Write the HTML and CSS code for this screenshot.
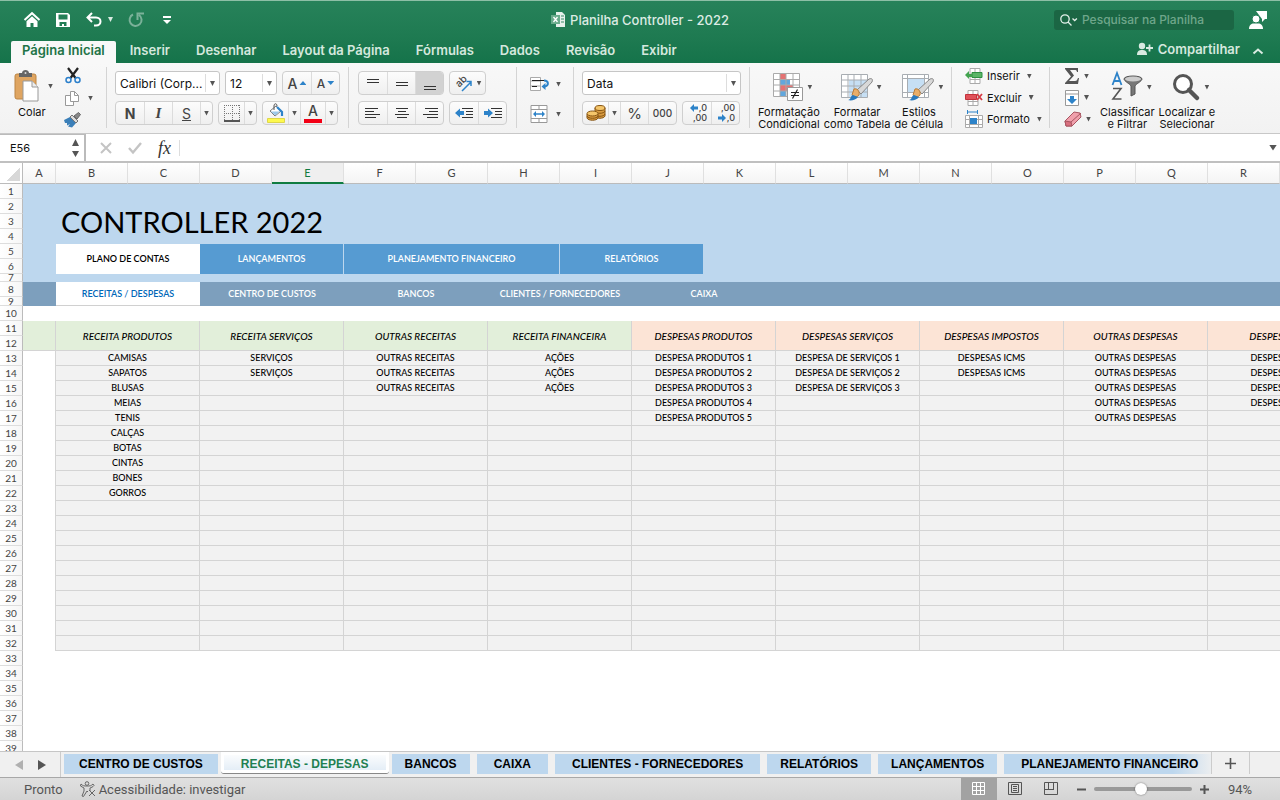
FILE: index.html
```
<!DOCTYPE html>
<html lang="pt-BR">
<head>
<meta charset="UTF-8">
<meta name="viewport" content="width=device-width, initial-scale=1.0">
<title>Planilha Controller - 2022</title>
<link rel="stylesheet" href="styles.css">
</head>
<body>

<header class="titlebar">
    <div class="quick">
        <button aria-label="Início"><svg width="18" height="18" viewBox="0 0 18 18"><path d="M1.500 9 9 2.200 16.500 9" fill="none" stroke="#fff" stroke-width="2"/><path d="M3.500 10.200 9 5.300l5.500 4.900V16h-4v-4h-3v4h-4z" fill="#fff"/></svg></button>
        <button aria-label="Salvar"><svg width="16" height="16" viewBox="0 0 16 16"><path fill="#fff" fill-rule="evenodd" d="M1 1h12l2 2v12H1zM3.500 2.500v5h9v-5zM4.500 10v4H7v-2h2v2h2.500v-4z"/></svg></button>
        <button aria-label="Desfazer"><svg width="18" height="18" viewBox="0 0 18 18"><path d="M7 2 2.500 6.500 7 11M3 6.500h8c6 0 6 8 0 8H9" fill="none" stroke="#fff" stroke-width="2"/></svg></button>
        <button class="caret-btn" aria-label="Opções de desfazer"><i class="caret light"></i></button>
        <button class="faded" aria-label="Refazer"><svg width="18" height="18" viewBox="0 0 18 18"><path d="M6 3.500a6 6 0 1 0 6 .5M10.500 9V2.500H17" fill="none" stroke="#fff" stroke-width="2"/></svg></button>
        <button class="customize" aria-label="Personalizar"><svg width="8" height="10" viewBox="0 0 8 10"><path d="M0 1h8v2H0zM0 5h8L4 9z" fill="#fff"/></svg></button>
    </div>
    <div class="doc-title">
        <svg width="15" height="15" viewBox="0 0 15 15"><path d="M5 0h6l3 3v12H5z" fill="#e6f1eb"/><path d="M10 4h3M10 7h3M10 10h3" stroke="#3a8a66"/><path d="M0 3h9v9H0z" fill="#69ab8b"/><path d="m2.500 5 4 5M6.500 5l-4 5" stroke="#fff" stroke-width="1.300"/></svg>
        Planilha Controller - 2022
    </div>
    <div class="title-right">
        <label class="search">
            <svg width="20" height="14" viewBox="0 0 20 14"><circle cx="6" cy="6" r="4.200" fill="none" stroke="#e4f0ea" stroke-width="1.300"/><path d="m9 9 3.500 3.500M13.500 5.500l2.200 2 2.200-2" fill="none" stroke="#e4f0ea" stroke-width="1.300"/></svg>
            <input type="text" placeholder="Pesquisar na Planilha" aria-label="Pesquisar na Planilha">
        </label>
        <button aria-label="Conta"><svg width="20" height="20" viewBox="0 0 20 20"><path d="M8 1h11v8h-2l-3 3V9z" fill="#fff"/><circle cx="8" cy="9" r="4" fill="#fff" stroke="#1f7c53"/><path d="M1 19c0-4 2.500-5.500 4.500-5.500h5c2 0 4.500 1.500 4.500 5.500z" fill="#fff"/></svg></button>
    </div>
</header>

<nav class="tabs">
    <a href="#" class="active">Página Inicial</a>
    <a href="#">Inserir</a>
    <a href="#">Desenhar</a>
    <a href="#">Layout da Página</a>
    <a href="#">Fórmulas</a>
    <a href="#">Dados</a>
    <a href="#">Revisão</a>
    <a href="#">Exibir</a>
    <button class="share">
        <svg width="18" height="14" viewBox="0 0 18 14"><circle cx="6" cy="4" r="3.200" fill="#d9eae1"/><path d="M1 13c0-4 2-5 5-5s5 1 5 5z" fill="#d9eae1"/><path d="M10 6h7M13.500 2.500v7" stroke="#d9eae1" stroke-width="1.800"/></svg>
        Compartilhar
    </button>
    <button class="collapse" aria-label="Recolher"><svg width="12" height="8" viewBox="0 0 12 8"><path d="m1.500 6.500 4.500-4 4.500 4" fill="none" stroke="#d9eae1" stroke-width="2"/></svg></button>
</nav>

<section class="ribbon">
    <div class="group clipboard">
        <button class="paste">
            <span class="with-caret">
                <svg width="26" height="32" viewBox="0 0 26 32"><rect x="1" y="4" width="21" height="25" rx="2" fill="#dfa561" stroke="#bc8545"/><path d="M5 3h3c0-4 7-4 7 0h3v4H5z" fill="#666"/><circle cx="11.500" cy="3" r="1" fill="#ddd"/><path d="M9 11h9l6 6v14H9z" fill="#fff" stroke="#999"/><path d="M18 11v6h6" fill="#eee" stroke="#999"/></svg>
                <i class="caret"></i>
            </span>
            <span class="paste-label">Colar</span>
        </button>
        <div class="stack">
            <button aria-label="Recortar"><svg width="18" height="17" viewBox="0 0 18 17"><path d="m4 1 7.500 10M14 1 6.500 11" stroke="#222" stroke-width="2.200"/><circle cx="4.500" cy="13" r="2.500" fill="none" stroke="#2a7fcb" stroke-width="1.500"/><circle cx="13.500" cy="13" r="2.500" fill="none" stroke="#2a7fcb" stroke-width="1.500"/></svg></button>
            <button aria-label="Copiar"><svg width="16" height="17" viewBox="0 0 16 17"><path d="M1.500 5.500h5l3 3v7h-8z" fill="#fff" stroke="#999"/><path d="M6.500 1.500h4l4 4v6h-8z" fill="#fff" stroke="#999"/><path d="M10.500 1.500v4h4" fill="none" stroke="#999"/></svg><i class="caret"></i></button>
            <button aria-label="Pincel"><svg width="18" height="16" viewBox="0 0 18 16"><path d="m0 8 6-3 6 6-4 4.500-4-1 2-2.500-3 1.500 0-2.500-2 0z" fill="#3b7fb8"/><path d="m6 5 2-2 6 6-2 2z" fill="#ddd" stroke="#777"/><path d="m10 4 4.500-3.500 2 2L13 7z" fill="#888" stroke="#666"/></svg></button>
        </div>
    </div>

    <div class="group rows">
        <div class="line">
            <select class="font-name" aria-label="Fonte"><option>Calibri (Corp...</option></select>
            <select class="font-size" aria-label="Tamanho"><option>12</option></select>
            <div class="btns">
                <button class="mid grow" aria-label="Aumentar fonte">A<i class="tri up"></i></button>
                <button class="mid shrink" aria-label="Diminuir fonte">A<i class="tri"></i></button>
            </div>
        </div>
        <div class="line">
            <div class="btns">
                <button class="mid"><b>N</b></button>
                <button class="mid serif"><i>I</i></button>
                <button class="mid"><u>S</u></button>
                <button class="drop" aria-label="Mais sublinhados"><i class="caret"></i></button>
            </div>
            <div class="btns">
                <button class="small" aria-label="Bordas"><svg width="18" height="18" viewBox="0 0 18 18"><path d="M1.500 1v15M9.500 1v15M16.500 1v15M1 1.500h16M1 9.500h16" stroke="#777" stroke-dasharray="1 1"/><path d="M1 17h16" stroke="#222" stroke-width="1.500"/></svg></button>
                <button class="drop" aria-label="Mais bordas"><i class="caret"></i></button>
            </div>
            <div class="btns">
                <button class="small" aria-label="Cor de preenchimento"><svg width="18" height="20" viewBox="0 0 18 20"><path d="m3 8 6-5 5 5-6 5z" fill="#fff" stroke="#777"/><path d="M3.500 8.500h9l-4 4z" fill="#9bc8ea"/><path d="M7 7V3c0-3 3-3 3 0" fill="none" stroke="#555"/><path d="m10 4 5 5v4" fill="none" stroke="#2d83c9" stroke-width="2.200"/><path d="M.5 15.500h17v4H.5z" fill="#fdf94e" stroke="#ded64a"/></svg></button>
                <button class="drop" aria-label="Mais cores"><i class="caret"></i></button>
                <button class="small color" aria-label="Cor da fonte"><span>A</span></button>
                <button class="drop" aria-label="Mais cores da fonte"><i class="caret"></i></button>
            </div>
        </div>
    </div>

    <div class="group rows align">
        <div class="line">
            <div class="btns">
                <button class="mid" aria-label="Alinhar acima"><svg width="14" height="16" viewBox="0 0 14 16"><path d="M1 4.500h12M1 7.500h12" stroke="#333"/></svg></button>
                <button class="mid" aria-label="Alinhar no meio"><svg width="14" height="16" viewBox="0 0 14 16"><path d="M1 7.500h12M1 10.500h12" stroke="#333"/></svg></button>
                <button class="mid pressed" aria-label="Alinhar abaixo"><svg width="14" height="16" viewBox="0 0 14 16"><path d="M1 11.500h12M1 14.500h12" stroke="#333"/></svg></button>
            </div>
            <div class="btns">
                <button class="wide" aria-label="Orientação"><svg width="20" height="20" viewBox="0 0 20 20"><text x="2" y="11" font-size="10" font-weight="500" fill="#444" transform="rotate(-45 8 9)">ab</text><path d="m8 18 9-9M12.500 8.500H17V13" fill="none" stroke="#2d83c9" stroke-width="1.500"/></svg><i class="caret"></i></button>
            </div>
        </div>
        <div class="line">
            <div class="btns">
                <button class="mid" aria-label="Alinhar à esquerda"><svg width="16" height="12" viewBox="0 0 16 12"><path d="M0 1.500h13M0 4.500h9M0 7.500h15M0 10.500h11" stroke="#333"/></svg></button>
                <button class="mid" aria-label="Centralizar"><svg width="16" height="12" viewBox="0 0 16 12"><path d="M2 1.500h12M4 4.500h8M1 7.500h14M3 10.500h10" stroke="#333"/></svg></button>
                <button class="mid" aria-label="Alinhar à direita"><svg width="16" height="12" viewBox="0 0 16 12"><path d="M3 1.500h13M7 4.500h9M1 7.500h15M5 10.500h11" stroke="#333"/></svg></button>
            </div>
            <div class="btns">
                <button class="mid" aria-label="Diminuir recuo"><svg width="18" height="12" viewBox="0 0 18 12"><path d="M7 1.500h11M11 4.500h7M11 7.500h7M7 10.500h11" stroke="#333"/><path d="m0 6 5-4.500V4h4v4H5v2.500z" fill="#2d83c9"/></svg></button>
                <button class="mid" aria-label="Aumentar recuo"><svg width="18" height="12" viewBox="0 0 18 12"><path d="M7 1.500h11M11 4.500h7M11 7.500h7M7 10.500h11" stroke="#333"/><path d="M9 6 4 1.500V4H0v4h4v2.500z" fill="#2d83c9"/></svg></button>
            </div>
        </div>
    </div>

    <div class="group rows merge">
        <button class="flat" aria-label="Quebrar texto"><svg width="20" height="14" viewBox="0 0 20 14"><path d="M.5.5h10v13H.5zM.5 4h10M.5 9h10" fill="#fff" stroke="#aaa"/><path d="M2 3.500h12M2 9.500h5" stroke="#222"/><path d="M14 3.500c5 0 5 5 1 6" fill="none" stroke="#2d83c9" stroke-width="2"/><path d="m11.500 9.500 4-3.500v7z" fill="#2d83c9"/></svg><i class="caret"></i></button>
        <button class="flat" aria-label="Mesclar"><svg width="18" height="18" viewBox="0 0 18 18"><path d="M1 .5h16v17H1zM1 4.500h16M1 13.500h16M9 0v4.500M9 13.500V18" fill="#fff" stroke="#999"/><path d="M4 9h10" stroke="#2d83c9" stroke-width="1.500"/><path d="m3 9 3-3v6zM15 9l-3-3v6z" fill="#2d83c9"/></svg><i class="caret"></i></button>
    </div>

    <div class="group rows">
        <div class="line">
            <select class="number-format" aria-label="Formato de número"><option>Data</option></select>
        </div>
        <div class="line">
            <div class="btns">
                <button class="small" aria-label="Moeda"><svg width="20" height="18" viewBox="0 0 20 18"><g fill="#d99b3f" stroke="#865514"><path d="M9 4v8c1 3 9 3 10 0V4z"/><ellipse cx="14" cy="4" rx="5" ry="2.500" fill="#f5c66b"/><path d="M9 7c1 3 9 3 10 0M9 10c1 3 9 3 10 0" fill="none"/><path d="M1 10v4c1 3 10 3 11 0v-4z"/><ellipse cx="6.500" cy="9.500" rx="5.500" ry="2.500" fill="#f5c66b"/><path d="M1 12c1 3 10 3 11 0" fill="none"/></g></svg></button>
                <button class="drop" aria-label="Mais moedas"><i class="caret"></i></button>
                <button class="mid percent">%</button>
                <button class="mid thousands">000</button>
            </div>
            <div class="btns">
                <button class="mid decimals"><span><svg width="9" height="8" viewBox="0 0 9 8"><path d="m0 4 4-4v2.500h4v3H4V8z" fill="#2d83c9"/></svg>,0</span><span>,00</span></button>
                <button class="mid decimals"><span>,00</span><span><svg width="9" height="8" viewBox="0 0 9 8"><path d="M8 4 4 0v2.500H0v3h4V8z" fill="#2d83c9"/></svg>,0</span></button>
            </div>
        </div>
    </div>

    <div class="group bigs">
        <button class="big">
            <span class="with-caret"><svg width="30" height="30" viewBox="0 0 30 30"><path d="M.5 1.500h26v23H.5z" fill="#fff"/><path d="M7 1.500h6v6H7zM7 13h13v6H7z" fill="#e57373"/><path d="M7 7.500h10V13H7zM7 19h6v6H7z" fill="#62a7dd"/><path d="M.5 1.500h26v23H.5zM7 1v24M13 1v24M20 1v24M0 7.500h27M0 13h27M0 19h27" fill="none" stroke="#aaa"/><path d="M14.500 15.500h15v13h-15z" fill="#fff" stroke="#999"/><path d="M18 20.500h8M18 23.500h8M24.500 17.500l-5 9" stroke="#222" stroke-width="1.200"/></svg><i class="caret"></i></span>
            Formatação<br>Condicional
        </button>
        <button class="big">
            <span class="with-caret"><svg width="32" height="30" viewBox="0 0 32 30"><path d="M.5 2.500h26v23H.5z" fill="#fff"/><path d="M8 8h18v17H8z" fill="#c6dff4"/><path d="M.5 2.500h26v23H.5zM7 2v23M13 2v23M20 2v23M0 8h27M0 14h27M0 20h27" fill="none" stroke="#a8adb2"/><path d="M28 7c3-1 4 0 3 3L20 22l-4-4z" fill="#d8d8d8" stroke="#888"/><path d="M13 17c3-1 6 2 5 6-2 3-6 2-7 0z" fill="#e8ad68" stroke="#b87c3a"/><path d="M7 28c3 0 2-4 5-5l5 2c-2 3-7 4-10 3z" fill="#2879bd"/></svg><i class="caret"></i></span>
            Formatar<br>como Tabela
        </button>
        <button class="big">
            <span class="with-caret"><svg width="32" height="30" viewBox="0 0 32 30"><path d="M.5 2.500h26v23H.5z" fill="#fff"/><path d="M6 7h17v13H6z" fill="#c6dff4"/><path d="M.5 2.500h26v23H.5zM5.500 2v23M22.500 2v23M0 6.500h27M0 20.500h27" fill="none" stroke="#a8adb2"/><path d="M28 7c3-1 4 0 3 3L20 22l-4-4z" fill="#d8d8d8" stroke="#888"/><path d="M13 17c3-1 6 2 5 6-2 3-6 2-7 0z" fill="#e8ad68" stroke="#b87c3a"/><path d="M7 28c3 0 2-4 5-5l5 2c-2 3-7 4-10 3z" fill="#2879bd"/></svg><i class="caret"></i></span>
            Estilos<br>de Célula
        </button>
    </div>

    <div class="group cells">
        <button><svg width="18" height="16" viewBox="0 0 18 16"><path d="M5 .5h10v15H5zM10 0v15M5 11.500h10" fill="#fff" stroke="#aaa"/><path d="M7 4.500h10v5H7z" fill="#5bb567" stroke="#2f8f42"/><path d="m0 7 4-4v3h3v3H4v2z" fill="#43a34f"/></svg>Inserir<i class="caret"></i></button>
        <button><svg width="18" height="16" viewBox="0 0 18 16"><path d="M3 .5h10v15H3zM8 0v15M3 11.500h10" fill="#fff" stroke="#aaa"/><path d="M.5 4.500h11v5H.5z" fill="#e0525a" stroke="#c2313a"/><path d="m12 4 5 6M17 4l-5 6" stroke="#d63a43" stroke-width="1.800"/></svg>Excluir<i class="caret"></i></button>
        <button><svg width="18" height="18" viewBox="0 0 18 18"><path d="M.5 5.500h17v12H.5zM4.500 5v12M13.500 5v12M0 9.500h18M0 14.500h18" fill="#fff" stroke="#aaa"/><path d="M5 8h7v6H5z" fill="#2d83c9"/><path d="M2.500 0v4M12.500 0v4M3 2h9" stroke="#2d83c9"/></svg>Formato<i class="caret"></i></button>
    </div>

    <div class="group last">
        <div class="tools">
            <button aria-label="Soma"><svg width="16" height="16" viewBox="0 0 16 16"><path d="M1 0h13v4h-1c-.5-2-1-2-2.500-2H6l4 5.500L5 13h6c2 0 2-1 3-3h1l-1 6H1v-1l6-6.500L1 1z" fill="#555"/></svg><i class="caret"></i></button>
            <button aria-label="Preencher"><svg width="16" height="16" viewBox="0 0 16 16"><path d="M1.500.5h13v15h-13zM1.500 4h13" fill="#fff" stroke="#999"/><path d="M6 6h4v3h3l-5 5-5-5h3z" fill="#2d83c9"/></svg><i class="caret"></i></button>
            <button aria-label="Limpar"><svg width="18" height="16" viewBox="0 0 18 16"><path d="m1 10 9-9 6 1 1 4-9 9H2z" fill="#f0a0ac" stroke="#a85561"/><path d="m1 10 6 1 1 4H2zM7 11l10-9" fill="#d9707f" stroke="#a85561"/></svg><i class="caret"></i></button>
        </div>
        <button class="big">
            <span class="with-caret"><svg width="32" height="30" viewBox="0 0 32 30"><path d="M1.500 13 6 1l4.500 12M3 9h6" fill="none" stroke="#2d83c9" stroke-width="1.800"/><path d="M2 16.500h8L2 27h8.500" fill="none" stroke="#555" stroke-width="1.600"/><path d="M13 7c0-4 18-4 18 0 0 2-6 5-7 7v8l-4 2V14c-1-2-7-5-7-7z" fill="#777" stroke="#555"/><ellipse cx="22" cy="7" rx="8" ry="2.500" fill="#ccc"/></svg><i class="caret"></i></span>
            Classificar<br>e Filtrar
        </button>
        <button class="big find">
            <span class="with-caret"><svg width="28" height="30" viewBox="0 0 28 30"><circle cx="11" cy="12" r="8.500" fill="#fff" stroke="#555" stroke-width="3"/><path d="m17 18 8 8" stroke="#555" stroke-width="4.500" stroke-linecap="round"/></svg><i class="caret"></i></span>
            Localizar e<br>Selecionar
        </button>
    </div>
</section>

<div class="formula-bar">
    <label class="name-box">
        <input type="text" value="E56" aria-label="Caixa de nome">
        <svg width="9" height="18" viewBox="0 0 9 18"><path d="M4.500 0 8 7H1zM4.500 18 8 12H1z" fill="#555"/></svg>
    </label>
    <button aria-label="Cancelar"><svg width="12" height="12" viewBox="0 0 12 12"><path d="m1 1 10 10M11 1 1 11" stroke="#c4c4c4" stroke-width="2"/></svg></button>
    <button aria-label="Confirmar"><svg width="14" height="12" viewBox="0 0 14 12"><path d="m1 6 4 4.500L13 1" fill="none" stroke="#c4c4c4" stroke-width="2.400"/></svg></button>
    <button class="fx">fx</button>
    <input class="formula" type="text" aria-label="Fórmula">
    <i class="caret big-caret"></i>
</div>

<main class="sheet">
<table id="grid">
    <colgroup><col class="c-num"><col class="c-a"><col span="25"></colgroup>
    <thead>
        <tr>
            <th class="corner"></th>
            <th>A</th><th>B</th><th>C</th><th>D</th><th class="selected">E</th><th>F</th><th>G</th><th>H</th><th>I</th><th>J</th><th>K</th><th>L</th><th>M</th><th>N</th><th>O</th><th>P</th><th>Q</th><th>R</th><th>S</th><th>T</th><th>U</th><th>V</th><th>W</th><th>X</th><th>Y</th><th>Z</th>
        </tr>
    </thead>
    <tbody>
        <tr class="sky"><th>1</th><td colspan="26"></td></tr>
        <tr class="sky"><th>2</th><td rowspan="3"></td><td class="title" colspan="25" rowspan="3">CONTROLLER 2022</td></tr>
        <tr><th>3</th></tr>
        <tr><th>4</th></tr>
        <tr class="sky menu">
            <th>5</th><td rowspan="2"></td>
            <td class="on" colspan="2" rowspan="2"><a href="#">PLANO DE CONTAS</a></td>
            <td class="item" colspan="2" rowspan="2"><a href="#">LANÇAMENTOS</a></td>
            <td class="item" colspan="3" rowspan="2"><a href="#">PLANEJAMENTO FINANCEIRO</a></td>
            <td class="item" colspan="2" rowspan="2"><a href="#">RELATÓRIOS</a></td>
            <td colspan="16" rowspan="2"></td>
        </tr>
        <tr><th>6</th></tr>
        <tr class="sky short"><th><span>7</span></th><td colspan="26"></td></tr>
        <tr class="submenu">
            <th>8</th><td rowspan="2"></td>
            <td class="on" colspan="2" rowspan="2"><a href="#">RECEITAS / DESPESAS</a></td>
            <td colspan="2" rowspan="2"><a href="#">CENTRO DE CUSTOS</a></td>
            <td colspan="2" rowspan="2"><a href="#">BANCOS</a></td>
            <td colspan="2" rowspan="2"><a href="#">CLIENTES / FORNECEDORES</a></td>
            <td colspan="2" rowspan="2"><a href="#">CAIXA</a></td>
            <td colspan="15" rowspan="2"></td>
        </tr>
        <tr class="short nine"><th><span>9</span></th></tr>
        <tr><th>10</th><td colspan="26"></td></tr>
        <tr class="heads">
            <th>11</th><td class="in" rowspan="2"></td>
            <td class="in" colspan="2" rowspan="2">RECEITA PRODUTOS</td>
            <td class="in" colspan="2" rowspan="2">RECEITA SERVIÇOS</td>
            <td class="in" colspan="2" rowspan="2">OUTRAS RECEITAS</td>
            <td class="in" colspan="2" rowspan="2">RECEITA FINANCEIRA</td>
            <td class="out" colspan="2" rowspan="2">DESPESAS PRODUTOS</td>
            <td class="out" colspan="2" rowspan="2">DESPESAS SERVIÇOS</td>
            <td class="out" colspan="2" rowspan="2">DESPESAS IMPOSTOS</td>
            <td class="out" colspan="2" rowspan="2">OUTRAS DESPESAS</td>
            <td class="out" colspan="2" rowspan="2">DESPESAS RH</td>
            <td colspan="7" rowspan="2"></td>
        </tr>
        <tr><th>12</th></tr>
    </tbody>
</table>
</main>

<nav class="sheet-tabs">
    <button class="arrow" aria-label="Anterior"><svg width="8" height="12" viewBox="0 0 8 12"><path d="M8 1v10L0 6z" fill="#b0b0b0"/></svg></button>
    <button class="arrow" aria-label="Próxima"><svg width="8" height="12" viewBox="0 0 8 12"><path d="M0 1v10l8-5z" fill="#555"/></svg></button>
    <div class="list">
        <a href="#">CENTRO DE CUSTOS</a>
        <a href="#" class="active">RECEITAS - DEPESAS</a>
        <a href="#" class="tight">BANCOS</a>
        <a href="#" class="loose">CAIXA</a>
        <a href="#" class="loose">CLIENTES - FORNECEDORES</a>
        <a href="#" class="tight">RELATÓRIOS</a>
        <a href="#" class="tight">LANÇAMENTOS</a>
        <a href="#" class="loose fade">PLANEJAMENTO FINANCEIRO</a>
    </div>
    <button class="add" aria-label="Nova planilha"><svg width="11" height="11" viewBox="0 0 11 11"><path d="M0 5.500h11M5.500 0v11" stroke="#555" stroke-width="1.600"/></svg></button>
</nav>

<footer class="status">
    <span class="ready">Pronto</span>
    <button class="access"><svg width="16" height="16" viewBox="0 0 16 16"><g fill="none" stroke="#666"><circle cx="7" cy="2.500" r="1.800"/><path d="M1 3c2 2 3 2 6 2s4 0 6-2l1 1.500c-1 1.500-3 2-4 2.500v3M1 3 .5 5 4 7v3l-2 5 1.500.5L7 10l1 1"/><path d="m9 9 6 6M15 9l-6 6"/></g></svg>Acessibilidade: investigar</button>
    <div class="views">
        <button class="active" aria-label="Normal"><svg width="14" height="14" viewBox="0 0 14 14"><path d="M.5.500h12v12H.500zM4.500 0v13M8.500 0v13M0 4.500h13M0 8.500h13" fill="none" stroke="#fff"/></svg></button>
        <button aria-label="Layout da Página"><svg width="14" height="14" viewBox="0 0 14 14"><path d="M.5.500h13v12H.500zM3.500 2.500h7v8h-7zM5 4.500h4M5 6.500h4M5 8.500h4" fill="none" stroke="#555"/></svg></button>
        <button aria-label="Quebras"><svg width="14" height="14" viewBox="0 0 14 14"><path d="M.5.500h13v12H.500zM4.500 0v7M9.500 0v7M0 7.500h10" fill="none" stroke="#555"/></svg></button>
    </div>
    <button class="zoom-btn" aria-label="Reduzir"><svg width="9" height="9" viewBox="0 0 9 9"><path d="M0 4.500h9" stroke="#555" stroke-width="2"/></svg></button>
    <input type="range" min="10" max="180" value="91" aria-label="Zoom">
    <button class="zoom-btn" aria-label="Ampliar"><svg width="9" height="9" viewBox="0 0 9 9"><path d="M0 4.500h9M4.500 0v9" stroke="#555" stroke-width="2"/></svg></button>
    <span class="percent-label">94%</span>
</footer>

<script>
    var contas = [
        ["CAMISAS", "SAPATOS", "BLUSAS", "MEIAS", "TENIS", "CALÇAS", "BOTAS", "CINTAS", "BONES", "GORROS"],
        ["SERVIÇOS", "SERVIÇOS"],
        ["OUTRAS RECEITAS", "OUTRAS RECEITAS", "OUTRAS RECEITAS"],
        ["AÇÕES", "AÇÕES", "AÇÕES"],
        ["DESPESA PRODUTOS 1", "DESPESA PRODUTOS 2", "DESPESA PRODUTOS 3", "DESPESA PRODUTOS 4", "DESPESA PRODUTOS 5"],
        ["DESPESA DE SERVIÇOS 1", "DESPESA DE SERVIÇOS 2", "DESPESA DE SERVIÇOS 3"],
        ["DESPESAS ICMS", "DESPESAS ICMS"],
        ["OUTRAS DESPESAS", "OUTRAS DESPESAS", "OUTRAS DESPESAS", "OUTRAS DESPESAS", "OUTRAS DESPESAS"],
        ["DESPESAS RH", "DESPESAS RH", "DESPESAS RH", "DESPESAS RH"]
    ];
    var body = document.querySelector('#grid tbody');

    // rows 13-32 hold the accounts, the rest are blank
    for (var n = 13; n <= 60; n++) {
        var row = body.insertRow();
        var html = '<th>' + n + '</th>';
        if (n <= 32) {
            row.className = 'data';
            html += '<td class="side"></td>';
            for (var c = 0; c < contas.length; c++) {
                html += '<td colspan="2">' + (contas[c][n - 13] || '') + '</td>';
            }
            html += '<td class="blank" colspan="7"></td>';
        } else {
            html += '<td colspan="26"></td>';
        }
        row.innerHTML = html;
    }
</script>

</body>
</html>
```
FILE: styles.css
```
* {
    box-sizing: border-box;
}

body {
    margin: 0;
    height: 100vh;
    display: flex;
    flex-direction: column;
    overflow: hidden;
    font-family: Inter, "Liberation Sans", sans-serif;
    font-size: 11px;
    color: #111;
    background-color: #fff;
}

button, input, select {
    font: inherit;
    color: inherit;
}

button {
    margin: 0;
    padding: 0;
    border: 0;
    background: none;
    white-space: nowrap;
}

a {
    color: inherit;
    text-decoration: none;
}

svg {
    display: block;
    flex: none;
    overflow: visible;
}

.caret {
    display: block;
    flex: none;
    width: 5px;
    height: 5px;
    background-color: #555;
    clip-path: polygon(0 0, 100% 0, 50% 100%);
}
.caret.light {
    background-color: #d9eae1;
}
.caret.big-caret {
    width: 8px;
    height: 6px;
}

/* green header */
.titlebar {
    flex: none;
    height: 38px;
    display: grid;
    grid-template-columns: 1fr auto 1fr;
    align-items: center;
    border-top: 1px solid #8dbfa6;
    background: linear-gradient(#27825a, #1e7a51);
}
.quick {
    display: flex;
    align-items: center;
    padding-left: 23px;
    gap: 14px;
}
.quick .caret-btn {
    margin-left: -9px;
}
.quick .faded {
    opacity: 0.4;
}
.quick .customize {
    margin-left: 4px;
}
.doc-title {
    display: flex;
    align-items: center;
    gap: 4px;
    font-size: 13px;
    font-weight: 500;
    color: #dcebe3;
}
.title-right {
    display: flex;
    justify-content: flex-end;
    align-items: center;
    gap: 14px;
    padding-right: 12px;
}
.search {
    display: flex;
    align-items: center;
    gap: 3px;
    width: 180px;
    height: 20px;
    padding-left: 5px;
    border-radius: 3px;
    background-color: #1b6644;
}
.search input {
    flex: 1;
    min-width: 0;
    padding: 0;
    border: 0;
    background: none;
    font-size: 12px;
    font-weight: 500;
}
.search input::placeholder {
    color: #6fa68b;
}

.tabs {
    flex: none;
    height: 25px;
    display: flex;
    align-items: flex-end;
    padding-left: 11px;
    background: linear-gradient(#1e7a51, #15734a);
    color: #d5e8de;
    font-size: 13px;
    font-weight: 600;
}
.tabs a {
    height: 22px;
    line-height: 19px;
    margin-left: 2px;
    padding: 0 12px;
}
.tabs a.active {
    margin: 0;
    padding: 0 11px;
    border-radius: 2px 2px 0 0;
    background-color: #f8f8f8;
    color: #217346;
}
.share {
    display: flex;
    align-items: center;
    gap: 4px;
    height: 25px;
    margin-left: auto;
    padding-bottom: 4px;
}
.collapse {
    height: 25px;
    padding: 0 16px 0 12px;
}

/* ribbon */
.ribbon {
    flex: none;
    height: 71px;
    display: flex;
    padding: 4px 0 5px;
    background: linear-gradient(#f8f8f8, #f2f2f2);
    border-bottom: 1px solid #c8c8c8;
}
.group {
    flex: none;
    display: flex;
    padding: 0 8px;
    border-right: 1px solid #d4d4d4;
}
.rows {
    flex-direction: column;
    gap: 6px;
    padding-top: 4px;
}
.line {
    display: flex;
    gap: 5px;
}
.with-caret {
    display: flex;
    align-items: center;
    gap: 5px;
}

.clipboard {
    width: 107px;
    padding: 0 0 0 14px;
    gap: 11px;
}
.paste {
    display: flex;
    flex-direction: column;
    gap: 3px;
    padding-top: 3px;
    text-align: left;
}
.paste .with-caret {
    gap: 8px;
}
.paste-label {
    padding-left: 4px;
}
.stack {
    display: flex;
    flex-direction: column;
    justify-content: space-between;
}
.stack button {
    display: flex;
    align-items: center;
    gap: 8px;
}

.ribbon select {
    appearance: none;
    height: 24px;
    padding: 0 4px;
    border: 1px solid #c6c6c6;
    border-radius: 3px;
    background: #fff url("data:image/svg+xml,%3Csvg xmlns='http://www.w3.org/2000/svg' width='14' height='20'%3E%3Cpath d='M.5 1v18' stroke='%23ddd'/%3E%3Cpath d='M5 8h5l-2.500 5z' fill='%23555'/%3E%3C/svg%3E") no-repeat right center;
    font-size: 12px;
    color: #111;
}
.ribbon .font-name {
    width: 105px;
}
.ribbon .font-size {
    width: 52px;
}
.ribbon .number-format {
    width: 159px;
}

.btns {
    display: flex;
    height: 24px;
    border: 1px solid #cfcfcf;
    border-radius: 4px;
    background: linear-gradient(#fcfcfc, #efefef);
    overflow: hidden;
}
.btns button {
    display: flex;
    align-items: center;
    justify-content: center;
    border-left: 1px solid #dcdcdc;
    color: #444;
}
.btns button:first-child {
    border-left: 0;
}
.btns .small {
    width: 25px;
}
.btns .mid {
    width: 28px;
    font-size: 14px;
}
.btns .wide {
    width: 35px;
    gap: 3px;
}
.btns .drop {
    width: 12px;
}
.btns .pressed {
    background-color: #d2d2d2;
}
.btns .serif {
    font-family: "Liberation Serif", serif;
    font-weight: bold;
    font-size: 15px;
}
.btns .grow, .btns .shrink {
    gap: 2px;
    font-weight: 500;
}
.btns .shrink {
    font-size: 12px;
}
.tri {
    width: 7px;
    height: 4px;
    background-color: #2d83c9;
    clip-path: polygon(0 0, 100% 0, 50% 100%);
}
.tri.up {
    clip-path: polygon(50% 0, 100% 100%, 0 100%);
}
.color span {
    width: 18px;
    height: 19px;
    line-height: 14px;
    font-size: 14px;
    font-weight: 500;
    border-bottom: 4px solid #f30016;
}
.btns .percent {
    font-size: 15px;
}
.btns .thousands {
    font-size: 10px;
    font-weight: 500;
}
.btns .decimals {
    flex-direction: column;
    align-items: flex-end;
    padding-right: 4px;
    font-size: 9px;
    line-height: 10px;
    font-weight: 500;
}
.decimals span {
    display: flex;
    align-items: center;
}
.align {
    width: 168px;
    padding-left: 9px;
}
.merge {
    gap: 12px;
    padding: 8px 12px 0 13px;
}
.flat {
    display: flex;
    align-items: center;
    justify-content: space-between;
    width: 31px;
    height: 18px;
}

.bigs {
    width: 202px;
    gap: 4px;
}
.big {
    display: flex;
    flex-direction: column;
    align-items: center;
    gap: 4px;
    padding-top: 5px;
    line-height: 12px;
}
.big .with-caret {
    padding-left: 8px;
    gap: 4px;
}

.cells, .tools {
    flex-direction: column;
    justify-content: space-between;
}
.cells {
    width: 98px;
    padding: 0 0 0 13px;
}
.cells button, .tools button {
    display: flex;
    align-items: center;
    gap: 4px;
    height: 18px;
}
.cells .caret {
    margin-left: 3px;
}
.last {
    border-right: 0;
    padding-left: 14px;
    gap: 4px;
}
.tools {
    display: flex;
    width: 32px;
}

/* formula bar */
.formula-bar {
    flex: none;
    height: 29px;
    display: flex;
    align-items: center;
    gap: 16px;
    padding-right: 3px;
    background-color: #fff;
    border-bottom: 2px solid #c0c0c0;
}
.name-box {
    display: flex;
    align-items: center;
    width: 86px;
    height: 27px;
    padding: 0 4px 0 10px;
    border-right: 2px solid #bbb;
    border-top: 1px solid #bbb;
}
.name-box input {
    width: 60px;
    padding: 0;
    border: 0;
    margin-right: auto;
}
.formula-bar button:first-of-type {
    margin-left: -2px;
}
.fx {
    font-family: "Liberation Serif", serif;
    font-style: italic;
    font-size: 18px;
    line-height: 20px;
    color: #333;
}
.formula {
    flex: 1;
    height: 16px;
    margin-left: -8px;
    border: 0;
    border-left: 1px solid #ddd;
}

/* worksheet */
.sheet {
    flex: 1;
    min-height: 0;
    overflow: auto;
    scrollbar-width: none;
}
table {
    table-layout: fixed;
    width: 1856px;
    border-collapse: separate;
    border-spacing: 0;
    font-family: Lato, "Open Sans", sans-serif;
    font-size: 9px;
    color: #000;
}
.c-num {
    width: 23px;
}
.c-a {
    width: 33px;
}
th, td {
    height: 15px;
    padding: 0;
    line-height: 14px;
    text-align: center;
    white-space: nowrap;
}
th {
    border-bottom: 1px solid #ddd;
    border-right: 1px solid #bbb;
    background: linear-gradient(90deg, #fff, #f6f6f6);
    color: #444;
    font-size: 10px;
    font-weight: normal;
}
thead th {
    height: 21px;
    font-size: 11px;
    background: linear-gradient(#fff, #f4f4f4);
    border-right-color: #e0e0e0;
    border-bottom-color: #bbb;
}
thead .corner {
    border-right-color: #bbb;
    background: linear-gradient(135deg, transparent 50%, #d8d8d8 50%) 6px 4px / 14px 14px no-repeat;
}
thead .selected {
    background: #efefef;
    color: #107c41;
    border-bottom: 2px solid #107c41;
}
.sky td {
    background-color: #bdd7ee;
}
.sky td.title {
    padding-left: 5px;
    text-align: left;
    font-size: 29px;
    line-height: 44px;
}
.menu a, .submenu a {
    display: block;
    font-weight: 600;
}
.menu td.on, .submenu td.on {
    background-color: #fff;
    color: #000;
}
.menu td.item {
    background-color: #569bd2;
    color: #fff;
    border-right: 1px solid #bdd7ee;
}
.submenu td {
    background-color: #7d9fbd;
    color: #fff;
}
.submenu td.on {
    color: #0067b8;
    box-shadow: inset 0 -1px #d0d0d0;
}
.short th, .short td {
    height: 8px;
    line-height: 7px;
}
.short span {
    display: block;
    height: 7px;
    overflow: hidden;
}
.nine th {
    height: 9px;
}
.heads td {
    border-right: 1px solid #d4d4d4;
    border-bottom: 1px solid #d4d4d4;
    font-size: 10px;
    font-style: italic;
    font-weight: 500;
}
.heads .in {
    background-color: #e2efda;
}
.heads .out {
    background-color: #fce4d6;
}
.heads td:last-child {
    border: 0;
}
.data td {
    background-color: #f2f2f2;
    border-right: 1px solid #d4d4d4;
    border-bottom: 1px solid #d4d4d4;
    font-weight: 500;
}
.data td.side, .data td.blank {
    background-color: #fff;
    border-bottom: 0;
}

/* sheet tabs */
.sheet-tabs {
    flex: none;
    height: 27px;
    display: flex;
    border-top: 1px solid #c6c6c6;
    border-bottom: 1px solid #a8a8a8;
    background-color: #f0f0f0;
    font-family: "Liberation Sans", Arial, sans-serif;
    font-size: 12px;
    font-weight: bold;
}
.arrow {
    display: flex;
    align-items: center;
    padding-left: 15px;
}
.list {
    flex: 1;
    min-width: 0;
    display: flex;
    align-items: flex-start;
    gap: 7px;
    margin-left: 14px;
    padding-left: 3px;
    border-left: 1px solid #ccc;
    overflow: hidden;
}
.list a {
    flex: none;
    height: 20px;
    margin-top: 2px;
    padding: 0 15px;
    line-height: 20px;
    background-color: #bdd7ee;
    color: #000;
    white-space: nowrap;
}
.list a.active {
    height: 22px;
    margin: 0 -4px;
    padding: 2px 20px 0;
    border-bottom: 1px solid #888;
    border-radius: 0 0 3px 3px;
    background: linear-gradient(#fff, #e0ebf5);
    box-shadow: inset 0 0 0 3px #fff;
    color: #1f8052;
}
.list a.tight {
    padding: 0 13px;
}
.list a.loose {
    padding: 0 17px;
}
.list a.fade {
    background: linear-gradient(90deg, #bdd7ee 80%, #f0f0f0);
}
.add {
    display: flex;
    align-items: center;
    justify-content: center;
    width: 39px;
    height: 22px;
    margin-right: 30px;
    border-left: 1px solid #ccc;
    border-right: 1px solid #ccc;
}

/* status bar */
.status {
    flex: none;
    height: 22px;
    display: flex;
    align-items: center;
    padding-left: 24px;
    background: linear-gradient(#e0e0e0, #d4d4d4);
    font-family: Roboto, sans-serif;
    font-size: 13px;
    color: #555;
}
.access {
    display: flex;
    align-items: center;
    gap: 3px;
    margin-left: 17px;
}
.views {
    display: flex;
    height: 22px;
    margin-left: auto;
}
.views button {
    display: flex;
    align-items: center;
    justify-content: center;
    width: 36px;
}
.views .active {
    background-color: #a2a2a2;
}
.zoom-btn {
    margin: 0 8px;
}
.status input {
    appearance: none;
    width: 98px;
    height: 4px;
    margin: 0;
    border-radius: 2px;
    background-color: #999;
}
.status input::-webkit-slider-thumb {
    appearance: none;
    width: 12px;
    height: 12px;
    border-radius: 50%;
    background-color: #fff;
    box-shadow: 0 0 2px rgba(0, 0, 0, 0.5);
}
.percent-label {
    width: 63px;
    padding-left: 11px;
}
```
